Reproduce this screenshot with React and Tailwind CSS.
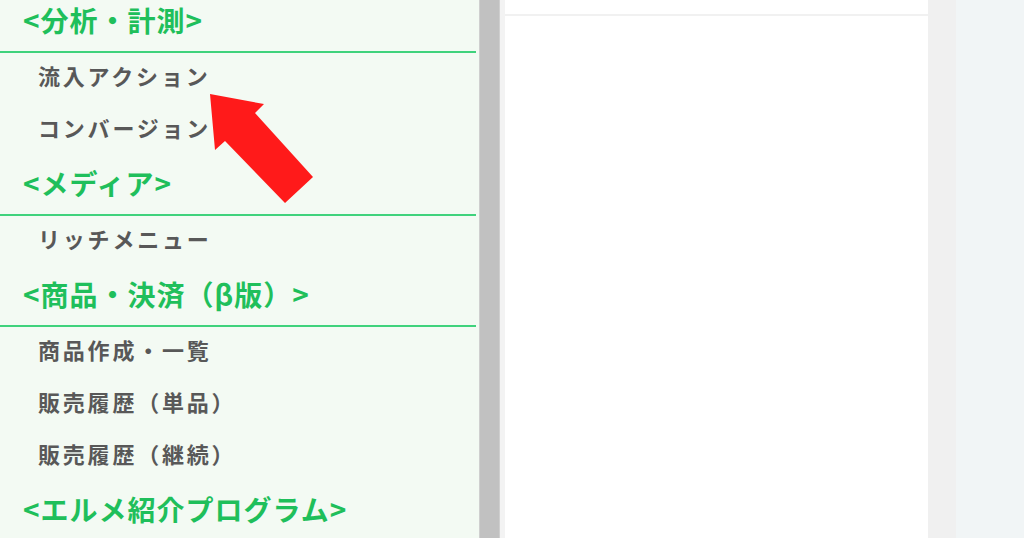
import React from "react";

const font = { fontFamily: '"Noto Sans CJK JP", "Noto Sans", sans-serif' };

function Header({ children }) {
  return (
    <div className="h-[59px] border-b-2 border-[#3fd27c] pl-[23px] pt-[12px]">
      <span className="block text-[28px] leading-[28px] font-bold text-[#1fbf5b] tracking-[1px] whitespace-nowrap">{children}</span>
    </div>
  );
}

function Item({ children }) {
  return (
    <div className="h-[52px] pl-[38px] pt-[9px]">
      <span className="block text-[22px] leading-[26px] font-bold text-[#585858] tracking-[2.8px] whitespace-nowrap">{children}</span>
    </div>
  );
}

export default function App() {
  return (
    <div className="relative w-[1024px] h-[538px] overflow-hidden flex bg-[#f1f5f6]" style={font}>
      <div className="w-[479px] h-full bg-[#f3faf3] overflow-hidden">
        <div className="-mt-[6px] flex flex-col pr-[3px]">
          <Header>&lt;分析・計測&gt;</Header>
          <Item>流入アクション</Item>
          <Item>コンバージョン</Item>
          <Header>&lt;メディア&gt;</Header>
          <Item>リッチメニュー</Item>
          <Header>&lt;商品・決済（β版）&gt;</Header>
          <Item>商品作成・一覧</Item>
          <Item>販売履歴（単品）</Item>
          <Item>販売履歴（継続）</Item>
          <Header>&lt;エルメ紹介プログラム&gt;</Header>
        </div>
      </div>
      <div className="w-[21px] h-full bg-[#c1c1c1] border-x border-[#cfcfcf]" />
      <div className="w-[5px] h-full bg-[#f3f3f3]" />
      <div className="w-[423px] h-full bg-white flex flex-col">
        <div className="h-[16px] border-b-2 border-[#f1f1f1]" />
      </div>
      <div className="w-[28px] h-full bg-[#f0f0f0]" />
      <div className="flex-1 h-full bg-[#f1f5f6]" />
      <svg className="absolute left-0 top-0" width="1024" height="538" viewBox="0 0 1024 538">
        <polygon
          points="210,94 264,104 255,113 313,177 285,203 225,141 215,150"
          fill="#ff1a1a"
        />
      </svg>
    </div>
  );
}
